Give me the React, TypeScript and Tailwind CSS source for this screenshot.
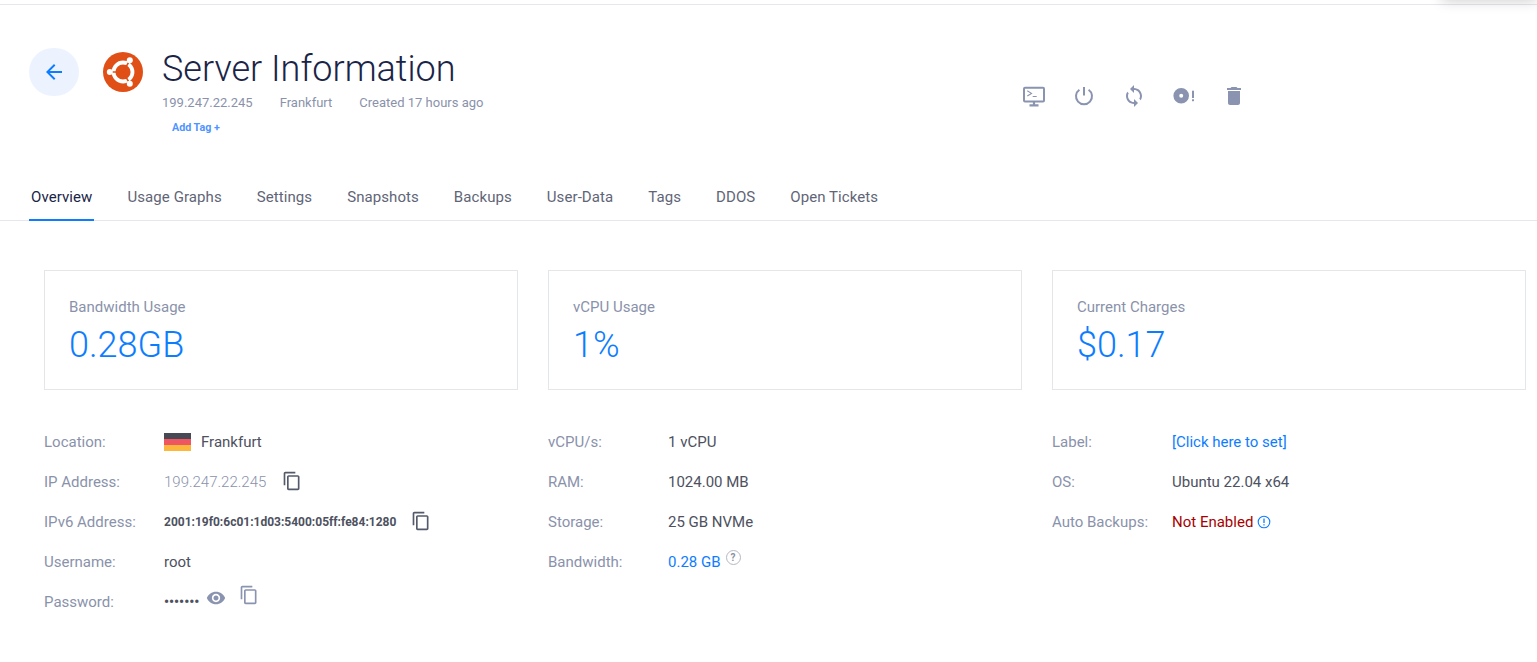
import React from 'react';
import { MdArrowBack, MdDelete, MdOutlineContentCopy, MdSync, MdVisibility } from 'react-icons/md';

const tabs = ['Overview', 'Usage Graphs', 'Settings', 'Snapshots', 'Backups', 'User-Data', 'Tags', 'DDOS', 'Open Tickets'];

const UbuntuLogo = () => (
  <svg width="40" height="40" viewBox="0 0 40 40" className="shrink-0">
    <circle cx="20" cy="20" r="20" fill="#e04f16" />
    <circle cx="20" cy="20" r="9.5" fill="none" stroke="#fff" strokeWidth="3.8" />
    <path d="M20 20 L6.5 20 M20 20 L27 8 M20 20 L27 32" stroke="#e04f16" strokeWidth="1.5" />
    <circle cx="6.8" cy="20" r="3" fill="#fff" />
    <circle cx="26.8" cy="8.2" r="3" fill="#fff" />
    <circle cx="26.8" cy="31.8" r="3" fill="#fff" />
  </svg>
);

const ConsoleIcon = () => (
  <svg width="24" height="24" viewBox="0 0 24 24" fill="none" stroke="#8a93b0">
    <rect x="2" y="3.8" width="20" height="13.6" rx="1" strokeWidth="2" />
    <path d="M5.3 6.8l4.2 2.6-4.2 2.6M10.7 12.5h4" strokeWidth="1.1" />
    <path d="M12 17.5v3M7.5 21.3h9" strokeWidth="2.2" />
  </svg>
);

const PowerIcon = () => (
  <svg width="24" height="24" viewBox="0 0 24 24" fill="none" stroke="#8a93b0" strokeWidth="2">
    <path d="M12 3v8.5" />
    <path d="M7.4 5.8a8 8 0 1 0 9.2 0" />
  </svg>
);

const DiscAlertIcon = () => (
  <svg width="24" height="24" viewBox="0 0 24 24" fill="#8a93b0">
    <path fillRule="evenodd" d="M9.2 4a7.8 7.8 0 1 1 0 15.6 7.8 7.8 0 0 1 0-15.6zm0 5.8a2 2 0 1 0 0 4 2 2 0 0 0 0-4z" />
    <rect x="20" y="6.7" width="2" height="7.3" />
    <rect x="20" y="15.3" width="2" height="1.9" />
  </svg>
);

const StatCard = ({ label, value }: { label: string; value: string }) => (
  <div className="h-[120px] border border-[#e5e6ea] pl-6 pt-[27px]">
    <div className="text-[15px] leading-[18px] text-[#8a92ab]">{label}</div>
    <div className="mt-[4px] text-[36px] leading-[50px] font-light text-[#0d7dff]">{value}</div>
  </div>
);

const Row = ({ label, children }: { label: string; children: React.ReactNode }) => (
  <div className="flex h-10 items-center text-[15px]">
    <div className="w-[120px] shrink-0 text-[#8a92ab]">{label}</div>
    <div className="flex items-center text-[#4d5160]">{children}</div>
  </div>
);

export default function App() {
  return (
    <div className="relative h-[662px] overflow-hidden bg-white font-['Roboto',sans-serif]">
      <div className="mt-1 h-px bg-[#e6e7ec]" />
      <div className="absolute -top-5 right-0 h-5 w-[95px] shadow-[0_0_14px_rgba(0,0,0,0.22)]" />

      {/* Header */}
      <div className="flex h-[171px] pl-[29px] pt-[43px]">
        <button className="flex h-[48px] w-[50px] items-center justify-center rounded-full bg-[#ecf3ff] text-[#0d7dff]">
          <MdArrowBack size={24} />
        </button>
        <div className="ml-6 mt-[4px]">
          <UbuntuLogo />
        </div>
        <div className="ml-[19px] w-[860px]">
          <div className="text-[36px] leading-[42px] font-light text-[#1a2447]">Server Information</div>
          <div className="mt-[4px] flex text-[13px] leading-[18px] text-[#8a92ab]">
            <span>199.247.22.245</span>
            <span className="ml-[27px]">Frankfurt</span>
            <span className="ml-[27px]">Created 17 hours ago</span>
          </div>
          <div className="ml-[10px] mt-[9px] text-[10.7px] leading-[14px] font-bold text-[#4f94ff]">Add Tag +</div>
        </div>
        <div className="mt-[36px] flex h-6 gap-[26px] text-[#8a93b0]">
          <ConsoleIcon />
          <PowerIcon />
          <MdSync size={24} />
          <DiscAlertIcon />
          <MdDelete size={24} />
        </div>
      </div>

      {/* Tabs */}
      <div className="flex h-[45px] gap-[31px] border-b border-[#e6e7ec] pl-[29px]">
        {tabs.map((tab, i) => (
          <div
            key={tab}
            className={
              i === 0
                ? 'h-[45px] border-b-2 border-[#0d7dff] px-[2px] pt-[11px] text-[15px] leading-5 tracking-[0.08px] text-[#1a2447]'
                : 'h-[45px] px-[2px] pt-[11px] text-[15px] leading-5 tracking-[0.08px] text-[#5f6577]'
            }
          >
            {tab}
          </div>
        ))}
      </div>

      {/* Stats */}
      <div className="mt-[49px] grid grid-cols-3 gap-x-[30px] pl-11 pr-[11px]">
        <StatCard label="Bandwidth Usage" value="0.28GB" />
        <StatCard label="vCPU Usage" value="1%" />
        <StatCard label="Current Charges" value="$0.17" />
      </div>

      {/* Details */}
      <div className="mt-[32px] grid grid-cols-3 gap-x-[30px] pl-11 pr-[11px]">
        <div>
          <Row label="Location:">
            <svg width="27" height="18" viewBox="0 0 27 18" className="mr-[10px]">
              <rect width="27" height="6" fill="#474a54" />
              <rect y="6" width="27" height="6" fill="#ee5661" />
              <rect y="12" width="27" height="6" fill="#fcb83c" />
            </svg>
            Frankfurt
          </Row>
          <Row label="IP Address:">
            <span className="font-light text-[#8a92ab]">199.247.22.245</span>
            <MdOutlineContentCopy size={20} className="ml-[16px] -mt-[3px] text-[#555a6b]" />
          </Row>
          <Row label="IPv6 Address:">
            <span className="text-[12px] font-bold">2001:19f0:6c01:1d03:5400:05ff:fe84:1280</span>
            <MdOutlineContentCopy size={20} className="ml-[15px] -mt-[3px] text-[#555a6b]" />
          </Row>
          <Row label="Username:">root</Row>
          <Row label="Password:">
            <span className="text-[14px] font-bold">•••••••</span>
            <MdVisibility size={20} className="ml-[7px] -mt-[9px] text-[#8a93b0]" />
            <MdOutlineContentCopy size={20} className="ml-[13px] -mt-[15px] text-[#8a93b0]" />
          </Row>
        </div>
        <div>
          <Row label="vCPU/s:">1 vCPU</Row>
          <Row label="RAM:">1024.00 MB</Row>
          <Row label="Storage:">25 GB NVMe</Row>
          <Row label="Bandwidth:">
            <span className="text-[#0d7dff]">0.28 GB</span>
            <span className="ml-[5px] -mt-[9px] flex h-[15px] w-[15px] items-center justify-center rounded-full border border-[#b4b8c6] text-[10px] font-bold text-[#8a8f9e]">?</span>
          </Row>
        </div>
        <div>
          <Row label="Label:">
            <span className="text-[#0d7dff]">[Click here to set]</span>
          </Row>
          <Row label="OS:">Ubuntu 22.04 x64</Row>
          <Row label="Auto Backups:">
            <span className="text-[#a80000]">Not Enabled</span>
            <svg width="14" height="14" viewBox="0 0 14 14" fill="none" stroke="#0d7dff" className="ml-[4px]">
              <circle cx="7" cy="7" r="5.8" strokeWidth="1.1" />
              <path d="M7 3.5v4.5M7 9.3v1.2" strokeWidth="1.3" />
            </svg>
          </Row>
        </div>
      </div>
    </div>
  );
}
